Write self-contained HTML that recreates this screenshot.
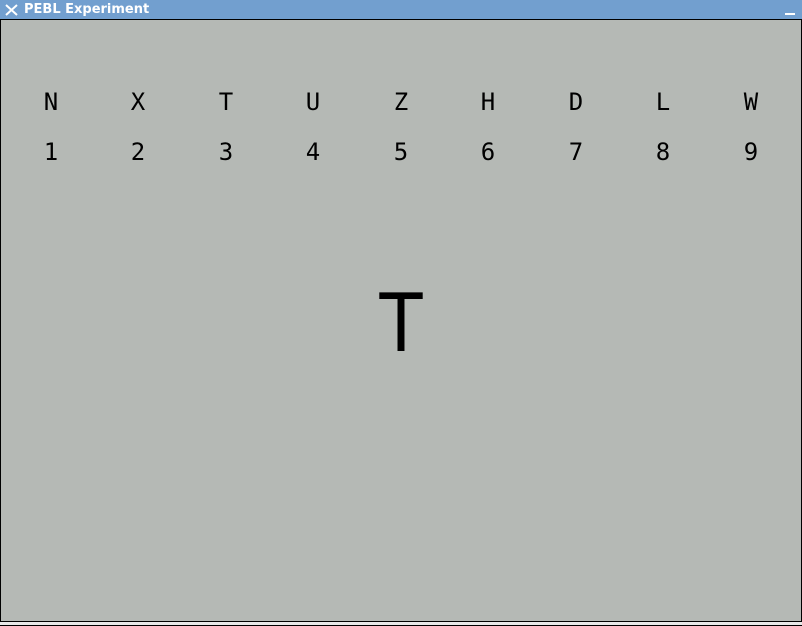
<!DOCTYPE html>
<html><head><style>
body{margin:0;width:802px;height:626px;overflow:hidden;background:#b5b9b5;position:relative;font-family:"DejaVu Sans Mono","Liberation Mono",monospace}
#tb{position:absolute;left:0;top:0;width:802px;height:20px;background:#729fcf;border-bottom:1px solid #000;box-sizing:border-box}
#tb span{position:absolute;left:24px;top:2px;font:bold 13px "DejaVu Sans",sans-serif;color:#fff}
.l{position:absolute;width:40px;margin-left:-20px;text-align:center;font-size:24px;line-height:24px;color:#000}
#bl{position:absolute;left:0;top:20px;width:1px;height:606px;background:#000}
#br{position:absolute;right:0;top:20px;width:1px;height:606px;background:#000}
#bb{position:absolute;left:0;top:621px;width:802px;height:5px;background:#e8e8e8;border-top:1px solid #000;border-bottom:1px solid #000;box-sizing:border-box}
</style></head><body>
<div id="tb"><svg style="position:absolute;left:5px;top:4px" width="13" height="12"><path d="M1 1L12 11M12 1L1 11" stroke="#fff" stroke-width="2"/></svg><span>PEBL Experiment</span><div style="position:absolute;left:785px;top:13px;width:10px;height:2px;background:#fff"></div></div>
<div id="bl"></div><div id="br"></div><div id="bb"></div>
<div class="l" style="left:51px;top:90px">N</div><div class="l" style="left:138px;top:90px">X</div><div class="l" style="left:226px;top:90px">T</div><div class="l" style="left:313px;top:90px">U</div><div class="l" style="left:401px;top:90px">Z</div><div class="l" style="left:488px;top:90px">H</div><div class="l" style="left:576px;top:90px">D</div><div class="l" style="left:663px;top:90px">L</div><div class="l" style="left:751px;top:90px">W</div>
<div class="l" style="left:51px;top:140px">1</div><div class="l" style="left:138px;top:140px">2</div><div class="l" style="left:226px;top:140px">3</div><div class="l" style="left:313px;top:140px">4</div><div class="l" style="left:401px;top:140px">5</div><div class="l" style="left:488px;top:140px">6</div><div class="l" style="left:576px;top:140px">7</div><div class="l" style="left:663px;top:140px">8</div><div class="l" style="left:751px;top:140px">9</div>
<div style="position:absolute;left:341px;width:120px;text-align:center;top:274px;font:80px/100px 'DejaVu Sans',sans-serif;color:#000;transform:scaleX(0.88)">T</div>
</body></html>
